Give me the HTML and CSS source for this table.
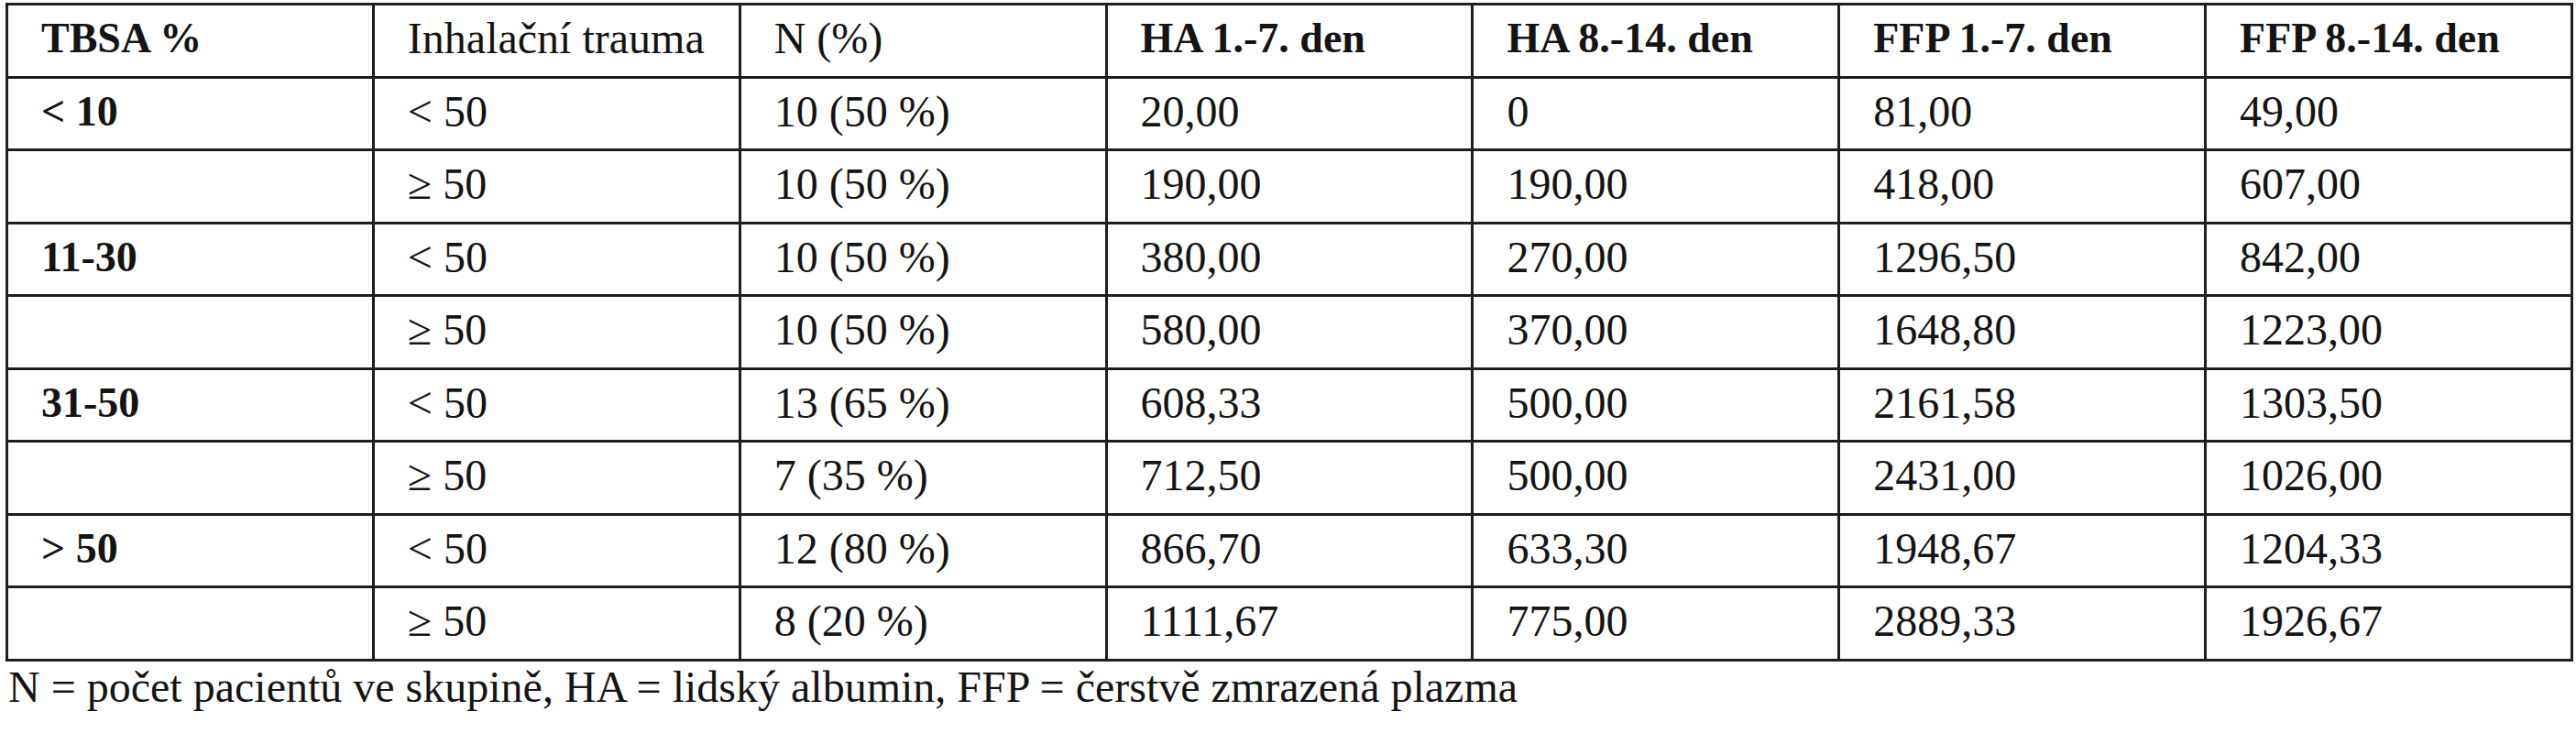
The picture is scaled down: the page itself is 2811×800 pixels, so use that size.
FILE: index.html
```html
<!DOCTYPE html>
<html lang="cs">
<head>
<meta charset="utf-8">
<title>Tabulka</title>
<link rel="stylesheet" href="styles.css">
</head>
<body>
<div class="page">
  <table class="data">
    <thead>
      <tr>
        <th class="b">TBSA %</th>
        <th>Inhalační trauma</th>
        <th>N (%)</th>
        <th class="b">HA 1.-7. den</th>
        <th class="b">HA 8.-14. den</th>
        <th class="b">FFP 1.-7. den</th>
        <th class="b">FFP 8.-14. den</th>
      </tr>
    </thead>
    <tbody>
      <tr><td class="b">&lt; 10</td><td>&lt; 50</td><td>10 (50 %)</td><td>20,00</td><td>0</td><td>81,00</td><td>49,00</td></tr>
      <tr><td></td><td>≥ 50</td><td>10 (50 %)</td><td>190,00</td><td>190,00</td><td>418,00</td><td>607,00</td></tr>
      <tr><td class="b">11-30</td><td>&lt; 50</td><td>10 (50 %)</td><td>380,00</td><td>270,00</td><td>1296,50</td><td>842,00</td></tr>
      <tr><td></td><td>≥ 50</td><td>10 (50 %)</td><td>580,00</td><td>370,00</td><td>1648,80</td><td>1223,00</td></tr>
      <tr><td class="b">31-50</td><td>&lt; 50</td><td>13 (65 %)</td><td>608,33</td><td>500,00</td><td>2161,58</td><td>1303,50</td></tr>
      <tr><td></td><td>≥ 50</td><td>7 (35 %)</td><td>712,50</td><td>500,00</td><td>2431,00</td><td>1026,00</td></tr>
      <tr><td class="b">&gt; 50</td><td>&lt; 50</td><td>12 (80 %)</td><td>866,70</td><td>633,30</td><td>1948,67</td><td>1204,33</td></tr>
      <tr><td></td><td>≥ 50</td><td>8 (20 %)</td><td>1111,67</td><td>775,00</td><td>2889,33</td><td>1926,67</td></tr>
    </tbody>
  </table>
  <p class="note">N = počet pacientů ve skupině, HA = lidský albumin, FFP = čerstvě zmrazená plazma</p>
</div>
</body>
</html>
```
FILE: styles.css
```css
html, body {
  margin: 0;
  padding: 0;
  background: #ffffff;
}

.page {
  padding: 3px 0 0 6px;
  font-family: "Liberation Serif", "Times New Roman", serif;
  color: #141414;
}

.data {
  border-collapse: collapse;
  table-layout: fixed;
  width: 2802px;
}

.data th,
.data td {
  border: 3px solid #1e1e1e;
  height: 72.5px;
  padding: 0 8px 4px 36px;
  text-align: left;
  vertical-align: middle;
  font-size: 48px;
  font-weight: normal;
  line-height: 1;
  white-space: nowrap;
}

.data .b {
  font-size: 46px;
  font-weight: bold;
}

.note {
  margin: 0 0 0 3px;
  font-size: 48px;
  line-height: 1.15;
}
```
